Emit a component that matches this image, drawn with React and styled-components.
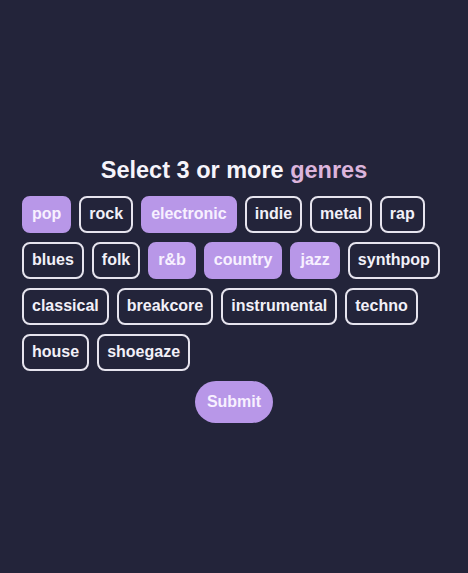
import { useState } from "react";
import styled, { createGlobalStyle } from "styled-components";

const GlobalStyle = createGlobalStyle`
    html, body {
        margin: 0;
        padding: 0;
        background: #23243a;
    }
    body {
        font-family: "Liberation Sans", Arial, sans-serif;
    }
`

const Page = styled.main`
    min-height: 100vh;
    display: flex;
    flex-direction: column;
    align-items: center;
    justify-content: center;
    padding-top: 5px;
    box-sizing: border-box;
    color: #f4f2fa;
`

const Title = styled.h1`
    margin: 0 0 12px;
    font-size: 23.5px;
    line-height: 28px;
    font-weight: 700;
    color: #f6f4fb;
`

const Highlight = styled.span`
    color: #dcb4dc;
`

const ChipList = styled.div`
    width: 100%;
    box-sizing: border-box;
    padding: 0 22px;
    display: flex;
    flex-wrap: wrap;
    gap: 9px 8px;
`

const Chip = styled.button`
    font-family: inherit;
    font-size: 16px;
    font-weight: 700;
    line-height: 18px;
    padding: 7.5px 8px;
    border-radius: 8px;
    border: 2px solid ${p => p.$selected ? "#b897e8" : "#e6e4ee"};
    background: ${p => p.$selected ? "#b897e8" : "transparent"};
    color: ${p => p.$selected ? "#f7f0ff" : "#f2f0f8"};
    cursor: pointer;
`

const Submit = styled.button`
    margin-top: 10px;
    font-family: inherit;
    font-size: 16px;
    font-weight: 700;
    line-height: 18px;
    padding: 12px 12px;
    border: none;
    border-radius: 21px;
    background: #b897e8;
    color: #f7f0ff;
    cursor: pointer;
`

const genres = ["pop", "rock", "electronic", "indie", "metal", "rap", "blues", "folk", "r&b", "country", "jazz", "synthpop", "classical", "breakcore", "instrumental", "techno", "house", "shoegaze"]

export default function App() {
    const [selecionados, setSelecionados] = useState(["pop", "electronic", "r&b", "country", "jazz"])

    const alterna = (g) => {
        setSelecionados(atual => atual.includes(g) ? atual.filter(x => x !== g) : [...atual, g])
    }

    return (
        <>
            <GlobalStyle />
            <Page>
                <Title>Select 3 or more <Highlight>genres</Highlight></Title>
                <ChipList>
                    {genres.map(g => (
                        <Chip key={g} $selected={selecionados.includes(g)} onClick={() => alterna(g)}>{g}</Chip>
                    ))}
                </ChipList>
                <Submit>Submit</Submit>
            </Page>
        </>
    )
}
